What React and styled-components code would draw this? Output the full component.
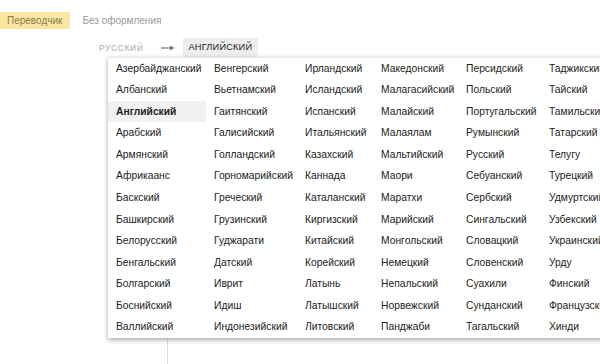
import React from 'react';
import styled, { createGlobalStyle } from 'styled-components';

const languages = [
    ['Азербайджанский', 'Албанский', 'Английский', 'Арабский', 'Армянский', 'Африкаанс', 'Баскский', 'Башкирский', 'Белорусский', 'Бенгальский', 'Болгарский', 'Боснийский', 'Валлийский'],
    ['Венгерский', 'Вьетнамский', 'Гаитянский', 'Галисийский', 'Голландский', 'Горномарийский', 'Греческий', 'Грузинский', 'Гуджарати', 'Датский', 'Иврит', 'Идиш', 'Индонезийский'],
    ['Ирландский', 'Исландский', 'Испанский', 'Итальянский', 'Казахский', 'Каннада', 'Каталанский', 'Киргизский', 'Китайский', 'Корейский', 'Латынь', 'Латышский', 'Литовский'],
    ['Македонский', 'Малагасийский', 'Малайский', 'Малаялам', 'Мальтийский', 'Маори', 'Маратхи', 'Марийский', 'Монгольский', 'Немецкий', 'Непальский', 'Норвежский', 'Панджаби'],
    ['Персидский', 'Польский', 'Португальский', 'Румынский', 'Русский', 'Себуанский', 'Сербский', 'Сингальский', 'Словацкий', 'Словенский', 'Суахили', 'Сунданский', 'Тагальский'],
    ['Таджикский', 'Тайский', 'Тамильский', 'Татарский', 'Телугу', 'Турецкий', 'Удмуртский', 'Узбекский', 'Украинский', 'Урду', 'Финский', 'Французский', 'Хинди'],
];

const selected = 'Английский';

const App = () => {
    return <Page>
        <GlobalStyle />
        <Tabs>
            <Tab active>Переводчик</Tab>
            <Tab>Без оформления</Tab>
        </Tabs>
        <LangBar>
            <SourceLang>Русский</SourceLang>
            <Arrow>
                <svg width="14" height="6" viewBox="0 0 14 6">
                    <path d="M0 3H11" stroke="#777" strokeWidth="1.2" />
                    <path d="M9 0.5L13.5 3L9 5.5Z" fill="#777" />
                </svg>
            </Arrow>
            <TargetLang>Английский</TargetLang>
            <Menu>
                {languages.flat().map((name) => (
                    <Item key={name} active={name === selected}>{name}</Item>
                ))}
            </Menu>
        </LangBar>
        <Workspace>
            <Pane />
        </Workspace>
    </Page>;
};

const GlobalStyle = createGlobalStyle`
body {
    margin: 0;
    background: #fff;
    font-family: "Liberation Sans", Arial, sans-serif;
}
`
const Page = styled.div`
width: 600px;
height: 364px;
overflow: hidden;
display: flex;
flex-direction: column;
`
const Tabs = styled.div`
display: flex;
align-items: center;
gap: 12px;
margin-top: 12px;
height: 17px;
`
const Tab = styled.div`
height: 17px;
line-height: 17px;
padding: 0 8px 0 ${(p) => (p.active ? '7px' : '0')};
font-size: 10px;
color: ${(p) => (p.active ? '#8a7a4a' : '#999')};
background: ${(p) => (p.active ? '#fbe7a2' : 'transparent')};
`
const LangBar = styled.div`
position: relative;
display: flex;
align-items: center;
margin: 9px 0 0 99px;
height: 19px;
`
const SourceLang = styled.div`
font-size: 8.5px;
letter-spacing: 0.6px;
text-transform: uppercase;
color: #aaa;
`
const Arrow = styled.div`
display: flex;
margin: 0 8px 0 17px;
`
const TargetLang = styled.div`
height: 19px;
line-height: 19px;
padding: 0 6px;
background: #eee;
font-size: 9.2px;
letter-spacing: 0.2px;
text-transform: uppercase;
color: #222;
`
const Menu = styled.div`
position: absolute;
top: 18.5px;
left: 9px;
width: 540px;
display: grid;
grid-template-columns: 98px 91px 76px 85px 83px 1fr;
grid-template-rows: repeat(13, 21.58px);
grid-auto-flow: column;
background: #fff;
border-top: 1px solid #e8e8e8;
box-shadow: 0 2px 5px rgba(0, 0, 0, 0.35);
z-index: 2;
`
const Item = styled.div`
padding-left: 8px;
line-height: 21.58px;
font-size: 10.3px;
white-space: nowrap;
color: #222;
font-weight: ${(p) => (p.active ? 'bold' : 'normal')};
background: ${(p) => (p.active ? '#f1f1f1' : 'transparent')};
`
const Workspace = styled.div`
flex: 1;
padding-left: 167px;
display: flex;
`
const Pane = styled.div`
flex: 1;
border-left: 1px solid #ddd;
`

export default App;
